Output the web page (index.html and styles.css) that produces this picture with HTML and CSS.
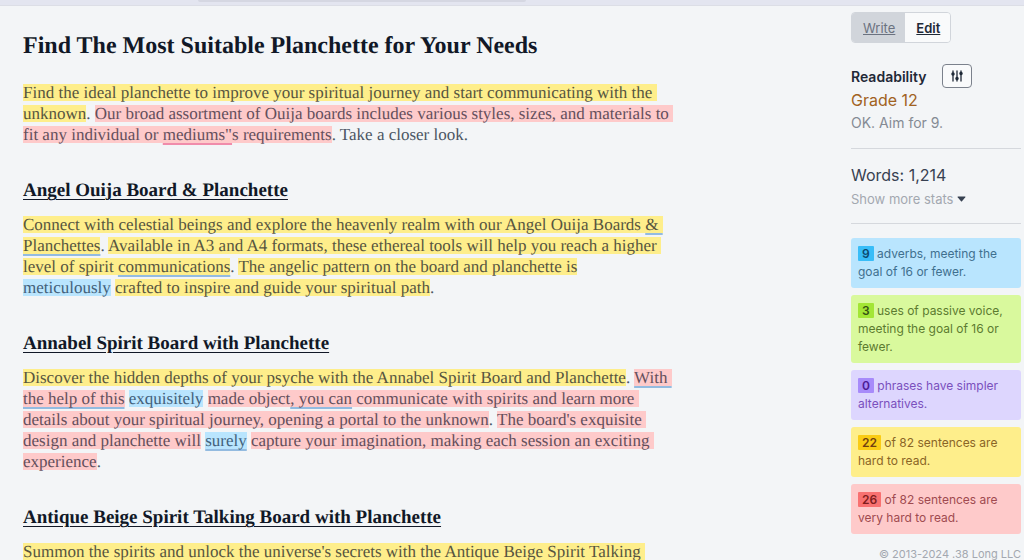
FILE: index.html
```
<!DOCTYPE html>
<html lang="en">
<head>
  <meta charset="UTF-8">
  <title>Find The Most Suitable Planchette for Your Needs</title>
  <link rel="stylesheet" href="styles.css">
</head>
<body>

<div class="topbar"><div class="topbar-tab"></div></div>

<div class="app">
  <!-- Document -->
  <main class="editor">
    <h1>Find The Most Suitable Planchette for Your Needs</h1>
    <p><span class="hard">Find the ideal planchette to improve your spiritual journey and start communicating with the <br>unknown</span>. <span class="very-hard">Our broad assortment of Ouija boards includes various styles, sizes, and materials to <br>fit any individual or <span class="spelling">mediums"</span>s requirements</span>. Take a closer look.</p>

    <h2>Angel Ouija Board &amp; Planchette</h2>
    <p><span class="hard">Connect with celestial beings and explore the heavenly realm with our Angel Ouija Boards <span class="grammar">&amp; <br>Planchettes</span></span>. <span class="hard">Available in A3 and A4 formats, these ethereal tools will help you reach a higher <br>level of spirit <span class="grammar">communications</span></span>. <span class="hard">The angelic pattern on the board and planchette is</span><br><span class="adverb">meticulously</span> <span class="hard">crafted to inspire and guide your spiritual path</span>.</p>

    <h2>Annabel Spirit Board with Planchette</h2>
    <p><span class="hard">Discover the hidden depths of your psyche with the Annabel Spirit Board and Planchette</span>. <span class="very-hard"><span class="grammar">With <br>the help of this</span></span> <span class="adverb">exquisitely</span> <span class="very-hard">made object<span class="grammar">, you can</span> communicate with spirits and learn more <br>details about your spiritual journey, opening a portal to the unknown</span>. <span class="very-hard">The board's exquisite <br>design and planchette will</span> <span class="adverb"><span class="grammar">surely</span></span> <span class="very-hard">capture your imagination, making each session an exciting <br>experience</span>.</p>

    <h2>Antique Beige Spirit Talking Board with Planchette</h2>
    <p><span class="hard">Summon the spirits and unlock the universe's secrets with the Antique Beige Spirit Talking </span></p>
  </main>

  <!-- Stats -->
  <aside class="sidebar">
    <div class="modes">
      <button type="button" class="mode">Write</button>
      <button type="button" class="mode active">Edit</button>
    </div>

    <div class="readability">
      <div class="readability-head">
        <h3>Readability</h3>
        <button type="button" class="settings" aria-label="Readability settings">
          <svg width="12" height="12" viewBox="0 0 12 12" fill="none" stroke="currentColor" stroke-width="1.3" stroke-linecap="round">
            <path d="M2 1v10M6 1v10M10 1v10"/>
            <circle cx="2" cy="4" r="1.1" fill="currentColor"/>
            <circle cx="6" cy="8.5" r="1.1" fill="currentColor"/>
            <circle cx="10" cy="3.5" r="1.1" fill="currentColor"/>
          </svg>
        </button>
      </div>
      <div class="grade">Grade 12</div>
      <div class="aim">OK. Aim for 9.</div>
    </div>

    <div class="stats">
      <div class="words">Words: 1,214</div>
      <button type="button" class="more">Show more stats
        <svg width="9" height="6" viewBox="0 0 9 6"><path d="M1 .5h7q.8 0 .3.7L5 5.2q-.5.5-1 0L.7 1.2Q.2.5 1 .5z" fill="#374151"/></svg>
      </button>
    </div>

    <div class="cards">
      <div class="card card-blue"><b>9</b> adverbs, meeting the goal of 16 or fewer.</div>
      <div class="card card-green"><b>3</b> uses of passive voice, meeting the goal of 16 or fewer.</div>
      <div class="card card-purple"><b>0</b> phrases have simpler alternatives.</div>
      <div class="card card-yellow"><b>22</b> of 82 sentences are hard to read.</div>
      <div class="card card-red"><b>26</b> of 82 sentences are very hard to read.</div>
    </div>

    <footer>© 2013-2024 .38 Long LLC</footer>
  </aside>
</div>

</body>
</html>
```
FILE: styles.css
```
* {
  box-sizing: border-box;
}
body {
  margin: 0;
  height: 100vh;
  display: flex;
  flex-direction: column;
  overflow: hidden;
  background: #f3f5f7;
  color: #4b5563;
  font-family: Inter, sans-serif;
}
h1, h2, h3, p {
  margin: 0;
}
button {
  font-family: inherit;
  cursor: pointer;
}

.topbar {
  flex: none;
  height: 6px;
  background: #e3e5f0;
  border-bottom: 1px solid #dcdee6;
}
.topbar-tab {
  width: 32%;
  height: 2px;
  margin-left: 198px;
  background: #d5d7e2;
  border-radius: 0 0 4px 4px;
}
.app {
  flex: 1;
  min-height: 0;
  display: flex;
  justify-content: space-between;
}

/* Document */
.editor {
  flex: 1;
  padding: 26px 0 0 23px;
  font-family: "Liberation Serif", serif;
  text-rendering: geometricPrecision;
}
.editor h1 {
  font-size: 24px;
  line-height: 28px;
  margin-bottom: 22px;
  color: #111827;
}
.editor h2 {
  font-size: 19px;
  line-height: 24px;
  margin-bottom: 11px;
  color: #111827;
  text-decoration: underline;
  text-decoration-thickness: 1px;
  text-underline-offset: 3px;
}
.editor p {
  font-size: 17px;
  line-height: 21px;
  margin-bottom: 34px;
  white-space: pre-wrap;
}
.hard, .very-hard, .adverb {
  background-position: 0 50%;
  background-size: 100% 17px;
  background-repeat: no-repeat;
}
.hard {
  background-image: linear-gradient(#feee8b, #feee8b);
  color: #57553f;
}
.very-hard {
  background-image: linear-gradient(#fecaca, #fecaca);
  color: #644f5c;
}
.adverb {
  background-image: linear-gradient(#b9e5fe, #b9e5fe);
  color: #42607a;
}
.grammar, .spelling {
  text-decoration: underline 2px #93bbe0;
  text-underline-offset: 3px;
  text-decoration-skip-ink: none;
}
.spelling {
  text-decoration-color: #f08cab;
}

/* Sidebar */
.sidebar {
  flex: none;
  width: 173px;
  padding: 6px 3px 0 0;
}
.modes {
  display: inline-flex;
  border: 1px solid #d1d5db;
  border-radius: 4px;
  overflow: hidden;
}
.mode {
  height: 29px;
  padding: 0 10px 0 11px;
  border: none;
  background: #d1d5db;
  color: #6b7280;
  font-size: 13px;
  text-decoration: underline;
}
.mode.active {
  background: #f9fafb;
  color: #1f2937;
  font-weight: 600;
}
.readability {
  padding: 21px 0 14px;
  border-bottom: 1px solid #d5d8dd;
}
.readability-head {
  display: flex;
  align-items: center;
  gap: 16px;
}
.readability h3 {
  font-size: 14px;
  font-weight: 600;
  color: #1f2937;
}
.settings {
  display: flex;
  align-items: center;
  justify-content: center;
  width: 30px;
  height: 24px;
  padding: 0;
  border: 1px solid #7b818c;
  border-radius: 4px;
  background: #f9fafb;
  color: #1f2937;
}
.grade {
  font-size: 16px;
  line-height: 24px;
  color: #a16222;
}
.aim {
  font-size: 14px;
  line-height: 22px;
  color: #858b94;
}
.stats {
  padding: 14px 0 12px;
  border-bottom: 1px solid #d5d8dd;
}
.words {
  font-size: 16px;
  line-height: 24px;
  color: #374151;
}
.more {
  display: flex;
  align-items: center;
  gap: 4px;
  padding: 0;
  border: none;
  background: none;
  font-size: 13px;
  line-height: 24px;
  color: #a3a8b0;
}
.cards {
  display: flex;
  flex-direction: column;
  gap: 7px;
  padding-top: 14px;
}
.card {
  padding: 7px;
  border-radius: 3px;
  font-size: 12px;
  line-height: 18px;
}
.card b {
  padding: 0 4px;
  border-radius: 1px;
  font-weight: 600;
}
.card-blue {
  background: #b9e5fe;
  color: #3f708f;
}
.card-blue b {
  background: #38bdf8;
  color: #0c4a6e;
}
.card-green {
  background: #d9f99d;
  color: #5c7b30;
}
.card-green b {
  background: #a3e635;
  color: #365314;
}
.card-purple {
  background: #ddd6fe;
  color: #7a50bd;
}
.card-purple b {
  background: #a78bfa;
  color: #4c1d95;
}
.card-yellow {
  background: #feee8b;
  color: #8a6526;
}
.card-yellow b {
  background: #facc15;
  color: #713f12;
}
.card-red {
  background: #fecaca;
  color: #a04a50;
}
.card-red b {
  background: #f87171;
  color: #7f1d1d;
}
footer {
  margin-top: 12px;
  font-size: 11px;
  line-height: 16px;
  text-align: right;
  color: #a3a8b0;
}
```
